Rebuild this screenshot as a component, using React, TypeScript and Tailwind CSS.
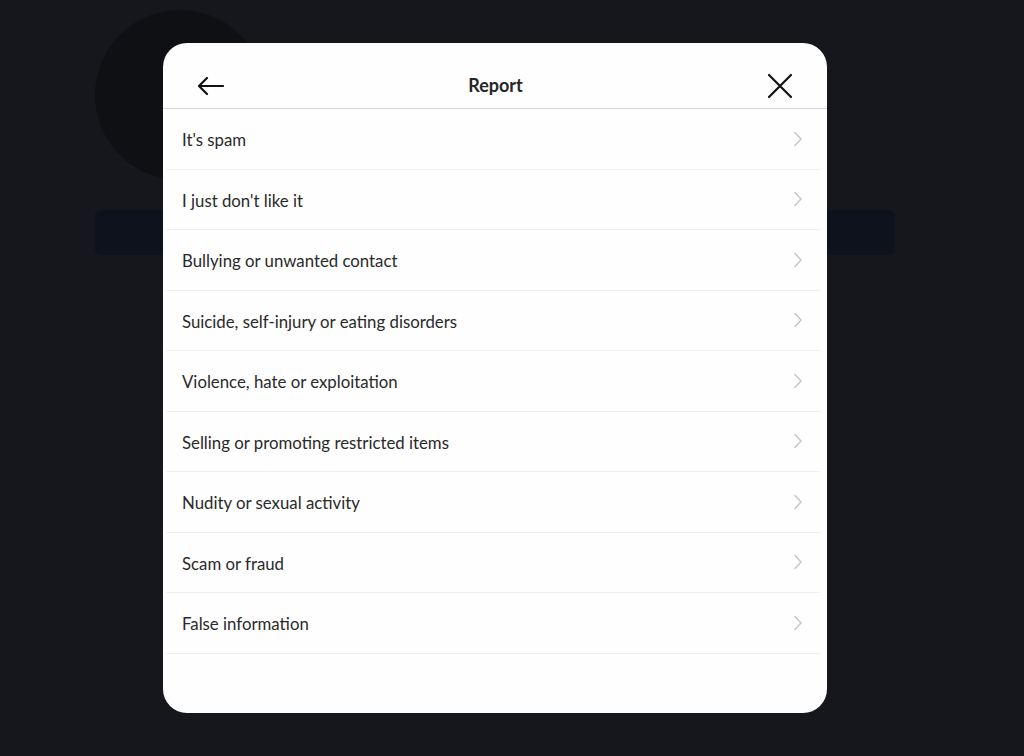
import React from 'react';

const reasons = [
	"It's spam",
	"I just don't like it",
	'Bullying or unwanted contact',
	'Suicide, self-injury or eating disorders',
	'Violence, hate or exploitation',
	'Selling or promoting restricted items',
	'Nudity or sexual activity',
	'Scam or fraud',
	'False information',
];

const Chevron = () => (
	<svg width="10" height="16" viewBox="0 0 10 16" fill="none" aria-hidden="true">
		<path d="M2 1.5l6 6.5-6 6.5" stroke="#c7c7c7" strokeWidth={1.5} strokeLinecap="round" strokeLinejoin="round" />
	</svg>
);

export default function App() {
	return (
		<div className="relative w-[1024px] h-[756px] overflow-hidden bg-[#15171c] font-['Lato','Liberation_Sans',sans-serif]">
			{/* dimmed page behind the dialog */}
			<div className="flex flex-col pl-[95px] pt-[10px]">
				<div className="w-[170px] h-[170px] rounded-full bg-[#0f1014]" />
				<div className="mt-[30px] w-[800px] h-[45px] rounded-md bg-[#0e121c]" />
			</div>

			<div className="absolute left-[163px] top-[43px] w-[664px] h-[670px] rounded-[24px] bg-[#fefefe] overflow-hidden flex flex-col">
				<div className="h-[66px] shrink-0 flex items-center justify-between pt-[20px] pl-[33px] pr-[34px] border-b border-[#dbdbdb]">
					<svg width="28" height="20" viewBox="0 0 28 20" fill="none" aria-hidden="true">
						<path d="M27 10H3M11 2l-8 8 8 8" stroke="#111" strokeWidth={2.2} strokeLinecap="round" strokeLinejoin="round" />
					</svg>
					<span className="text-[18px] font-bold text-[#262626]">Report</span>
					<svg width="26" height="26" viewBox="0 0 26 26" fill="none" aria-hidden="true">
						<path d="M2 2l22 22M24 2L2 24" stroke="#111" strokeWidth={2.2} strokeLinecap="round" />
					</svg>
				</div>
				<div className="flex flex-col">
					{reasons.map((r) => (
						<div key={r} className="h-[60.5px] mx-[3px] mr-[7px] border-b border-[#f0f0f0] flex items-center justify-between pl-[16px] pr-[17px]">
							<span className="pt-[2px] text-[16.8px] text-[#2a2a2a]">{r}</span>
							<Chevron />
						</div>
					))}
				</div>
			</div>
		</div>
	);
}
